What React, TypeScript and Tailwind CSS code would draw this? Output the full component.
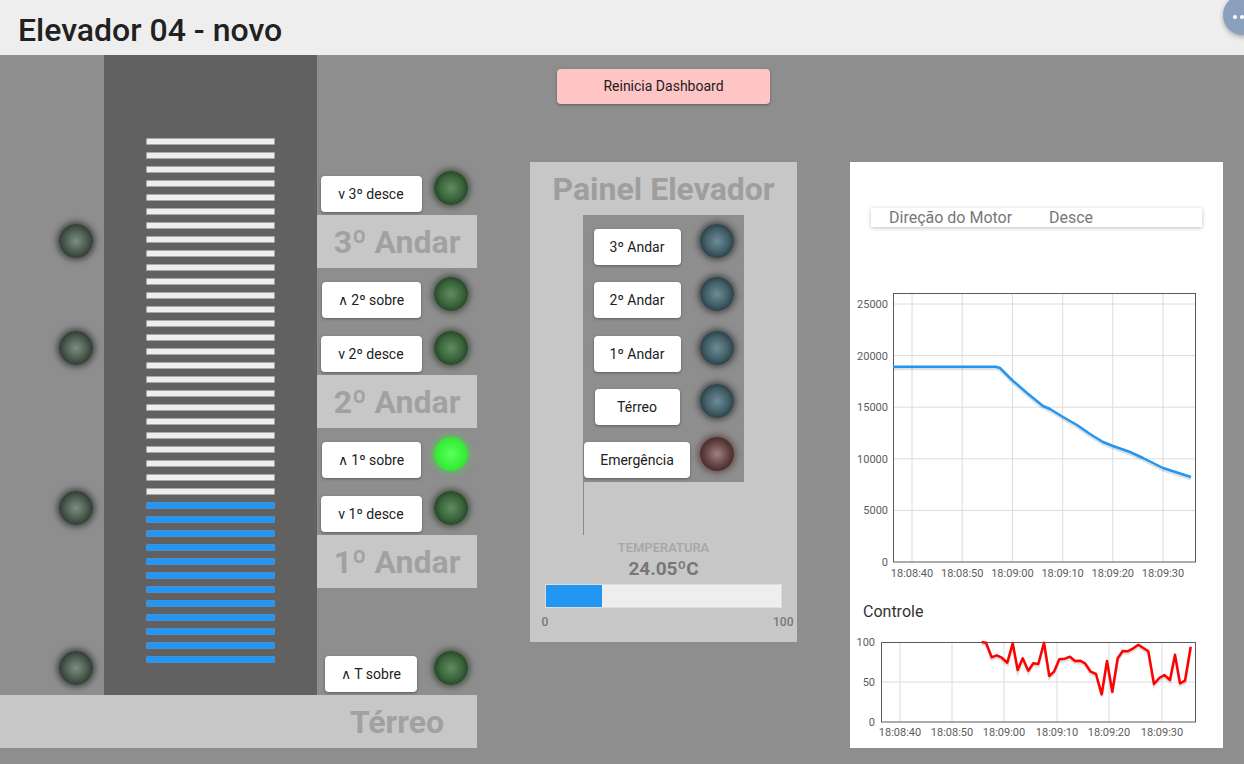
import React from "react";

type LampKind = "shaft" | "off" | "on" | "panel" | "alarm";

const lampClass: Record<LampKind, string> = {
  shaft:
    "bg-[radial-gradient(circle,#7e8e7f_0%,#4d5d50_45%,#131a14_100%)] shadow-[0_0_6px_2px_rgba(0,0,0,0.55)]",
  off: "bg-[radial-gradient(circle,#5f8c60_0%,#3d683f_45%,#102512_100%)] shadow-[0_0_6px_2px_rgba(10,30,10,0.55)]",
  on: "bg-[radial-gradient(circle,#5cff5c_0%,#3cf03c_50%,#2bd62b_100%)] shadow-[0_0_6px_2px_rgba(60,230,60,0.5)]",
  panel:
    "bg-[radial-gradient(circle,#6c8d97_0%,#46626b_45%,#111e25_100%)] shadow-[0_0_6px_2px_rgba(0,0,0,0.5)]",
  alarm:
    "bg-[radial-gradient(circle,#a08181_0%,#684747_45%,#261010_100%)] shadow-[0_0_6px_2px_rgba(60,10,10,0.5)]",
};

function Lamp({ kind, className = "" }: { kind: LampKind; className?: string }) {
  return <div className={`w-[34px] h-[34px] rounded-full shrink-0 ${lampClass[kind]} ${className}`} />;
}

function Btn({ label, w }: { label: string; w: string }) {
  return (
    <button
      className={`${w} h-[36px] bg-white rounded-[4px] text-[14px] text-[#212121] shadow-[0_1px_3px_rgba(0,0,0,0.35)] flex items-center justify-center whitespace-nowrap`}
    >
      {label}
    </button>
  );
}

// linha de botão + lâmpada (coluna 108 + 52)
function Row({ label, w, lamp, className = "" }: { label: string; w: string; lamp: LampKind; className?: string }) {
  return (
    <div className={`flex h-[36px] ${className}`}>
      <div className="w-[108px] flex justify-center">
        <Btn label={label} w={w} />
      </div>
      <div className="w-[52px] flex justify-center">
        <Lamp kind={lamp} className="-mt-[5px]" />
      </div>
    </div>
  );
}

function Band({ label, className = "" }: { label: string; className?: string }) {
  return (
    <div className={`h-[53px] bg-[#c7c7c7] flex items-center justify-center text-[32px] font-bold text-[#a1a1a1] ${className}`}>
      {label}
    </div>
  );
}

const bars = Array.from({ length: 38 }, (_, i) => i >= 26);

const velPoints =
  "43,81.7 145.7,81.7 150,83 162,95 177,108 193,121 200,124 213,132 227,140 240,149 253,157 263,161 280,167 293,173 313,183 341,192";

const ctrlPoints =
  "131.7,10 136,10.7 141.7,25.3 146.7,23.3 151.7,25.7 157.3,30.7 162.7,11.3 167.7,38 172.7,26.3 178.3,38.7 183.3,31.3 188.3,32 194,10.7 199.3,44 204,39.7 209.3,27.3 215,26.7 220,24.7 225,29 230,28.7 235,31.3 240.7,39.7 246,42 251.7,62.3 257,29 262.3,59.7 267.7,26.3 272.7,19 277.7,19.3 282.7,16.7 288.3,12.7 293.3,16 298.3,19.3 304,52 309.3,46 314.3,43 320,48 325,22.7 330,51.3 335,48.7 340.7,14.7";

const times = ["18:08:40", "18:08:50", "18:09:00", "18:09:10", "18:09:20", "18:09:30"];

function VelChart() {
  const hy = [19, 70.6, 122.2, 173.8, 225.4, 277];
  const vx = [62, 112.2, 162.4, 212.6, 262.8, 313];
  const yl = ["25000", "20000", "15000", "10000", "5000", "0"];
  return (
    <svg width="373" height="300" className="block" fontFamily="Roboto, sans-serif">
      {hy.slice(0, 5).map((y) => (
        <line key={y} x1="43" x2="346" y1={y} y2={y} stroke="#dcdcdc" />
      ))}
      {vx.map((x) => (
        <line key={x} x1={x} x2={x} y1="8" y2="277" stroke="#dcdcdc" />
      ))}
      <rect x="43.5" y="8.5" width="302" height="268.5" fill="none" stroke="#5a5a5a" />
      {hy.map((y, i) => (
        <text key={y} x="38" y={y + 4} textAnchor="end" fontSize="11" fill="#5c5c5c">
          {yl[i]}
        </text>
      ))}
      {vx.map((x, i) => (
        <text key={x} x={x} y="292" textAnchor="middle" fontSize="11" fill="#5c5c5c">
          {times[i]}
        </text>
      ))}
      <polyline points={velPoints} fill="none" stroke="#000" strokeOpacity="0.12" strokeWidth="3" transform="translate(0,2)" />
      <polyline points={velPoints} fill="none" stroke="#2196f3" strokeWidth="2.5" strokeLinejoin="round" />
    </svg>
  );
}

function CtrlChart() {
  const vx = [50, 102, 154, 207, 259, 312];
  return (
    <svg width="373" height="113" className="block" fontFamily="Roboto, sans-serif">
      <line x1="31" x2="346" y1="50" y2="50" stroke="#dcdcdc" />
      {vx.map((x) => (
        <line key={x} x1={x} x2={x} y1="10" y2="90" stroke="#dcdcdc" />
      ))}
      <rect x="31.5" y="10.5" width="314" height="79.5" fill="none" stroke="#5a5a5a" />
      <text x="25" y="14" textAnchor="end" fontSize="11" fill="#5c5c5c">100</text>
      <text x="25" y="54" textAnchor="end" fontSize="11" fill="#5c5c5c">50</text>
      <text x="25" y="94" textAnchor="end" fontSize="11" fill="#5c5c5c">0</text>
      {vx.map((x, i) => (
        <text key={x} x={x} y="104" textAnchor="middle" fontSize="11" fill="#5c5c5c">
          {times[i]}
        </text>
      ))}
      <polyline points={ctrlPoints} fill="none" stroke="#000" strokeOpacity="0.12" strokeWidth="3" transform="translate(0,2)" />
      <polyline points={ctrlPoints} fill="none" stroke="#ff0000" strokeWidth="2.5" strokeLinejoin="round" />
    </svg>
  );
}

export default function App() {
  return (
    <div className="relative w-[1244px] h-[764px] overflow-hidden bg-[#8e8e8e] font-[family-name:Roboto,sans-serif]">
      {/* cabeçalho */}
      <header className="h-[55px] bg-[#eeeeee] flex items-center pl-[18px] pt-[4px]">
        <h1 className="text-[32px] font-medium text-[#212121] leading-none">Elevador 04 - novo</h1>
      </header>
      <div className="absolute top-[-5px] left-[1223px] w-[40px] h-[40px] rounded-full bg-[#8aa0bc] shadow-[0_2px_5px_rgba(0,0,0,0.3)] flex items-center pl-[10px] pt-[4px] gap-[3px]">
        <span className="w-[4px] h-[4px] rounded-full bg-white" />
        <span className="w-[4px] h-[4px] rounded-full bg-white" />
      </div>

      <main className="flex h-[709px]">
        {/* poço do elevador */}
        <div className="w-[477px] flex flex-col">
          <div className="flex h-[640px]">
            <div className="w-[104px] flex flex-col pl-[59px] pt-[169px]">
              <Lamp kind="shaft" />
              <Lamp kind="shaft" className="mt-[73px]" />
              <Lamp kind="shaft" className="mt-[126px]" />
              <Lamp kind="shaft" className="mt-[126px]" />
            </div>
            <div className="w-[213px] bg-[#616161] flex flex-col items-center pt-[83px] gap-[7px]">
              {bars.map((blue, i) => (
                <div
                  key={i}
                  className={
                    blue
                      ? "w-[129px] h-[7px] rounded-[1px] bg-[#2196f3] border border-[#4a8fd0]"
                      : "w-[129px] h-[7px] rounded-[1px] bg-[#eeeeee] border border-[#a8a8a8]"
                  }
                />
              ))}
            </div>
            <div className="w-[160px] flex flex-col pt-[121px]">
              <Row label="v 3º desce" w="w-[101px]" lamp="off" />
              <Band label="3º Andar" className="mt-[3px]" />
              <Row label="∧ 2º sobre" w="w-[99px]" lamp="off" className="mt-[14px]" />
              <Row label="v 2º desce" w="w-[101px]" lamp="off" className="mt-[18px]" />
              <Band label="2º Andar" className="mt-[3px]" />
              <Row label="∧ 1º sobre" w="w-[99px]" lamp="on" className="mt-[14px]" />
              <Row label="v 1º desce" w="w-[101px]" lamp="off" className="mt-[18px]" />
              <Band label="1º Andar" className="mt-[3px]" />
              <Row label="∧ T sobre" w="w-[92px]" lamp="off" className="mt-[68px]" />
            </div>
          </div>
          <div className="h-[53px] bg-[#c7c7c7] flex justify-end">
            <div className="w-[160px] flex items-center justify-center text-[32px] font-bold text-[#a1a1a1]">Térreo</div>
          </div>
        </div>

        {/* painel */}
        <div className="ml-[53px] w-[267px] flex flex-col items-center">
          <button className="mt-[14px] w-[213px] h-[35px] bg-[#ffc4c4] rounded-[4px] text-[14px] text-[#212121] shadow-[0_1px_3px_rgba(0,0,0,0.35)]">
            Reinicia Dashboard
          </button>
          <div className="mt-[58px] w-[267px] h-[480px] bg-[#c7c7c7] flex flex-col items-center">
            <div className="h-[53px] flex items-center justify-center text-[32px] font-bold text-[#9e9e9e]">Painel Elevador</div>
            <div className="w-[161px] bg-[#8e8e8e] flex flex-col pt-[14px] pb-[4px]">
              <Row label="3º Andar" w="w-[87px]" lamp="panel" />
              <Row label="2º Andar" w="w-[87px]" lamp="panel" className="mt-[17px]" />
              <Row label="1º Andar" w="w-[87px]" lamp="panel" className="mt-[18px]" />
              <Row label="Térreo" w="w-[85px]" lamp="panel" className="mt-[17px]" />
              <Row label="Emergência" w="w-[106px]" lamp="alarm" className="mt-[17px]" />
            </div>
            <div className="w-[161px] h-[53px] border-l border-[#8a8a8a]" />
            <div className="mt-[6px] text-[13px] leading-[14px] font-medium text-[#a6a6a6]">TEMPERATURA</div>
            <div className="mt-[4px] text-[19px] leading-[20px] font-bold text-[#777777]">24.05ºC</div>
            <div className="mt-[5px] w-[237px] h-[24px] bg-[#eeeeee] border border-[#dedede] flex">
              <div className="w-[24%] bg-[#2196f3]" />
            </div>
            <div className="mt-[7px] ml-[8px] w-[252px] flex justify-between text-[12px] leading-[14px] font-medium text-[#777777]">
              <span>0</span>
              <span>100</span>
            </div>
          </div>
        </div>

        {/* gráficos */}
        <div className="ml-[53px] mt-[107px] w-[373px] h-[586px] bg-white flex flex-col">
          <div className="mt-[46px] mx-[21px] h-[19px] bg-white shadow-[0_1px_4px_rgba(0,0,0,0.25)] flex items-center pl-[18px] text-[16px] leading-[19px] text-[#777777]">
            <span className="w-[160px]">Direção do Motor</span>
            <span>Desce</span>
          </div>
          <div className="mt-[58px]">
            <VelChart />
          </div>
          <div className="mt-[17px] pl-[13px] text-[16px] leading-[20px] text-[#333333]">Controle</div>
          <div className="mt-[10px]">
            <CtrlChart />
          </div>
        </div>
      </main>
    </div>
  );
}
